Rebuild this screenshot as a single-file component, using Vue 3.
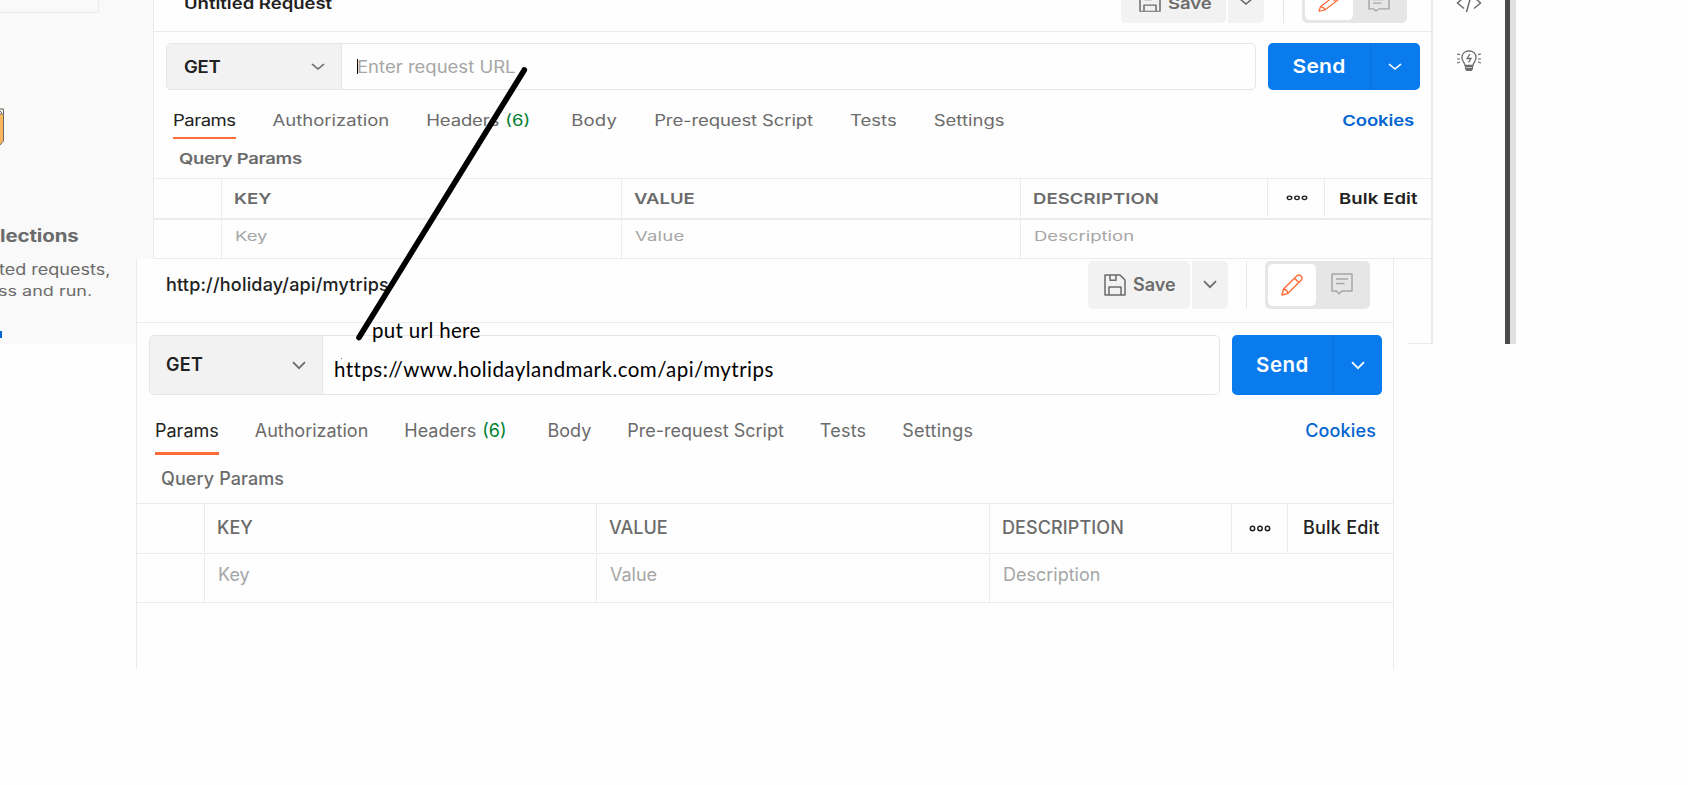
<script setup>
// Sets the tracking so a label occupies its designed width.
const vFit = {
  mounted(el, { value }) {
    const n = el.textContent.length
    const gap = (value - el.offsetWidth) / n
    el.style.letterSpacing = gap.toFixed(3) + 'px'
  }
}

const panels = [
  {
    kind: 'compact',
    title: ['Untitled Request', 148],
    get: 36,
    placeholder: true,
    send: 53,
    save: 44,
    tabs: [
      ['Params', 63], ['Authorization', 117], ['Headers', 73, 25], ['Body', 46],
      ['Pre-request Script', 159], ['Tests', 47], ['Settings', 71]
    ],
    cookies: 72,
    query: 123,
    head: [['KEY', 37], ['VALUE', 61], ['DESCRIPTION', 126]],
    bulk: 79,
    row: [['Key', 33], ['Value', 49], ['Description', 100]]
  },
  {
    kind: 'regular',
    title: ['http://holiday/api/mytrips', 223],
    get: 37,
    placeholder: false,
    send: 53,
    save: 43,
    tabs: [
      ['Params', 64], ['Authorization', 114], ['Headers', 72, 24], ['Body', 44],
      ['Pre-request Script', 157], ['Tests', 46], ['Settings', 71]
    ],
    cookies: 71,
    query: 123,
    head: [['KEY', 36], ['VALUE', 59], ['DESCRIPTION', 122]],
    bulk: 77,
    row: [['Key', 32], ['Value', 47], ['Description', 97]]
  }
]
</script>

<template>
  <div class="page">
    <aside class="sidebar">
      <div class="stub"></div>
      <svg class="folder" width="5" height="38" viewBox="0 0 5 38">
        <path d="M0 .5H3.5V33L0 37.5Z" fill="#ffb65a" />
        <path d="M0 1H3V6H0Z" fill="#eee" />
        <path d="M0 1H3.5V33L0 37M0 6H3M0 3l2 2" fill="none" stroke="#6b6b6b" />
      </svg>
      <div class="side-title"><span class="t" v-fit="79">lections</span></div>
      <div class="side-text"><span class="t" v-fit="111">ted requests,</span></div>
      <div class="side-text second"><span class="t" v-fit="94">ss and run.</span></div>
      <div class="side-link"></div>
    </aside>

    <div class="frame"></div>
    <div class="frame-foot"></div>
    <div class="rail">
      <svg class="code" width="26" height="20" viewBox="0 0 26 20">
        <path d="M8 5L1.5 11L8 16.500M18 5L24.500 11L18 16.500M15.500 2L10.500 20" fill="none" stroke="#6b6b6b" stroke-width="1.500" />
      </svg>
      <svg class="bulb" width="26" height="22" viewBox="0 0 26 22">
        <path d="M9 15.500C9 13 6 11.500 6 7.500C6 3.500 9 1 13 1s7 2.500 7 6.500c0 4-3 5.500-3 8z" fill="none" stroke="#6b6b6b" stroke-width="1.300" />
        <path d="M9 16h8v3l-1.500 2h-5L9 19z" fill="#6b6b6b" />
        <path d="M10 17.500h6" stroke="#fff" stroke-width=".6" />
        <path d="M14 4l-3 4.500h4L12.500 12.500" fill="none" stroke="#6b6b6b" stroke-width="1.300" />
        <path d="M1 4l3 .7M1 9h3M1 13l3-1M25 4l-3 .7M25 9h-3M25 13l-3-1" stroke="#6b6b6b" stroke-width="1.200" />
      </svg>
    </div>
    <div class="edge"></div>

    <section v-for="p in panels" :key="p.kind" class="panel" :class="p.kind">
      <header class="head">
        <span class="t title" v-fit="p.title[1]">{{ p.title[0] }}</span>
        <div class="save">
          <svg class="ico" viewBox="0 0 22 22" preserveAspectRatio="none">
            <path d="M1 1H16L21 6V21H1ZM5 21V13H17V21M6 1V6.200H12V1" fill="none" stroke="#6b6b6b" stroke-width="1.500" stroke-linejoin="round" />
          </svg>
          <span class="t" v-fit="p.save">Save</span>
        </div>
        <div class="save-more">
          <svg class="chev" viewBox="0 0 14 9" preserveAspectRatio="none"><path d="M1 1.200L7 7.200L13 1.200" /></svg>
        </div>
        <div class="sep"></div>
        <div class="toggle">
          <div class="on">
            <svg class="ico" viewBox="0 0 22 22" preserveAspectRatio="none">
              <path d="M1 21L2.500 15L16 1.700Q18 .3 20 2T20.300 6L7 19.300ZM13.500 4.200L17.800 8.500M2.500 15Q6 15.500 7 19.300" fill="none" stroke="#ff6c37" stroke-width="1.400" stroke-linejoin="round" />
            </svg>
          </div>
          <div class="off">
            <svg class="ico" viewBox="0 0 22 22" preserveAspectRatio="none">
              <path d="M1 1H21V18H11L8 20.700L5.500 18H1ZM5 6H17M5 10.500H13.500" fill="none" stroke="#a6a6a6" stroke-width="1.500" stroke-linejoin="round" />
            </svg>
          </div>
        </div>
      </header>

      <div class="request">
        <div class="urlbox">
          <div class="method">
            <span class="t" v-fit="p.get">GET</span>
            <svg class="chev" viewBox="0 0 14 9" preserveAspectRatio="none"><path d="M1 1.200L7 7.200L13 1.200" /></svg>
          </div>
          <div class="url">
            <template v-if="p.placeholder">
              <i class="caret"></i><span class="t" v-fit="159">Enter request URL</span>
            </template>
            <span v-else class="note" v-fit="439">https://www.holidaylandmark.com/api/mytrips</span>
          </div>
        </div>
        <div class="send">
          <div class="send-label"><span class="t" v-fit="p.send">Send</span></div>
          <div class="send-more">
            <svg class="chev" viewBox="0 0 14 9" preserveAspectRatio="none"><path d="M1 1.200L7 7.200L13 1.200" /></svg>
          </div>
        </div>
      </div>

      <nav class="tabs">
        <div v-for="(tab, i) in p.tabs" :key="tab[0]" class="tab" :class="{ active: i === 0, counted: tab[2] }">
          <span class="t" v-fit="tab[1]">{{ tab[0] }}</span>
          <span v-if="tab[2]" class="t count" v-fit="tab[2]">(6)</span>
        </div>
        <div class="tab cookies"><span class="t" v-fit="p.cookies">Cookies</span></div>
      </nav>

      <div class="query"><span class="t" v-fit="p.query">Query Params</span></div>

      <div class="grid titles">
        <div class="cell"></div>
        <div v-for="h in p.head" :key="h[0]" class="cell"><span class="t" v-fit="h[1]">{{ h[0] }}</span></div>
        <div class="cell dots">
          <svg class="ellipsis" viewBox="0 0 22 7" preserveAspectRatio="none">
            <g fill="none" stroke="#212121" stroke-width="1.500">
              <circle cx="3.500" cy="3.500" r="2.200" /><circle cx="11" cy="3.500" r="2.200" /><circle cx="18.500" cy="3.500" r="2.200" />
            </g>
          </svg>
        </div>
        <div class="cell bulk"><span class="t" v-fit="p.bulk">Bulk Edit</span></div>
      </div>
      <div class="grid inputs">
        <div class="cell"></div>
        <div v-for="r in p.row" :key="r[0]" class="cell"><span class="t" v-fit="r[1]">{{ r[0] }}</span></div>
      </div>
    </section>

    <svg class="marker" width="180" height="300" viewBox="350 60 180 300">
      <path d="M524.300 70L359 337.500" stroke="#000" stroke-width="5.600" stroke-linecap="round" />
      <path d="M341 358.500h1" stroke="#777" />
    </svg>
    <div class="hint"><span class="note" v-fit="109">put url here</span></div>
  </div>
</template>

<style>
body { background: #fff; }
</style>

<style scoped>
.page {
  position: relative;
  width: 1688px;
  height: 785px;
  overflow: hidden;
  background: #fefefe;
  font-family: Inter, "Liberation Sans", sans-serif;
  color: #6b6b6b;
}
.page * { box-sizing: border-box; }
.t, .note { display: inline-block; flex: none; white-space: pre; line-height: 24px; }

.sidebar { position: absolute; left: 0; top: 0; width: 153px; height: 344px; background: #f9f9f9; overflow: hidden; }
.stub { width: 99px; height: 13px; border: solid #ebebeb; border-width: 0 1px 1px 0; border-radius: 0 0 3px 0; }
.folder { display: block; margin-top: 95px; }
.side-title { height: 24px; margin-top: 78px; }
.side-text { height: 24px; margin-top: 10px; margin-left: -1px; }
.side-text.second { margin-top: -3px; margin-left: -2px; }
.side-title .t { font-size: 20.500px; font-weight: 700; transform: scaleY(.84); }
.side-text .t { transform: scaleY(.85); }
.side-text.second .t { transform: scaleY(.76); }
.side-link { width: 2px; height: 7px; margin-top: 28px; background: #0265d2; }

.frame { position: absolute; left: 1431px; top: 0; width: 2px; height: 344px; background: #ebebeb; }
.frame-foot { position: absolute; left: 1408px; top: 343px; width: 24px; height: 1px; background: #ebebeb; }
.rail { position: absolute; left: 1456px; top: -8px; width: 26px; }
.code, .bulb { display: block; }
.bulb { margin-top: 38px; }
.edge { position: absolute; left: 1505px; top: 0; width: 11px; height: 344px; background: #e0e0e0; border-left: 5px solid #4b4b4b; }

.panel { position: absolute; background: #fefefe; overflow: hidden; }
.compact {
  --squash: .82; --head-h: 47px; --btn: 38px; --icon: 17px; --size: 18.500px;
  left: 153px; top: 0; width: 1278px; height: 259px;
  border-left: 1px solid #ebebeb;
}
.regular {
  --squash: 1; --head-h: 63px; --btn: 48px; --icon: 22px; --size: 18px;
  left: 136px; top: 259px; width: 1258px; height: 410px;
  border: solid #ebebeb; border-width: 0 1px;
}
.t { font-size: var(--size, 18px); transform: scaleY(var(--squash)); }

.head { display: flex; align-items: center; height: calc(var(--head-h) + 1px); border-bottom: 1px solid #ebebeb; }
.compact .head { margin-top: -16px; padding: 0 24px 7px 30px; }
.regular .head { padding: 0 23px 12px 29px; }
.title { color: #212121; font-weight: 600; margin-right: auto; }
.compact .title { position: relative; top: -1px; }
.regular .title { font-weight: 500; }
.save, .save-more { display: flex; align-items: center; height: var(--btn); background: #f2f2f2; }
.save { width: 102px; padding-left: 16px; gap: 7px; border-radius: 5px; font-weight: 600; }
.compact .save { width: 105px; padding-left: 18px; padding-bottom: 2px; }
.save-more { justify-content: center; width: 36px; margin-left: 2px; border-radius: 0 5px 5px 0; }
.compact .save-more { padding-bottom: 4px; }
.ico { display: block; flex: none; width: 22px; height: var(--icon); }
.chev { display: block; width: 14px; height: calc(9px * var(--squash)); fill: none; stroke: #6b6b6b; stroke-width: 1.700; }
.sep { width: 1px; height: var(--btn); margin: 0 18px; background: #e6e6e6; }
.compact .sep { margin-left: 19px; }
.toggle { display: flex; width: 105px; height: var(--btn); padding: 3px; background: #e6e6e6; border-radius: 5px; }
.on, .off { display: flex; flex: 1; align-items: center; justify-content: center; }
.on { flex: 0 0 48px; background: #fff; border-radius: 5px; }
.off { padding-left: 1px; padding-bottom: 1px; }
.compact .on, .compact .off { padding-bottom: 2px; }

.request { display: flex; gap: 12px; height: 60px; margin: 12px 11px 0 12px; }
.compact .request { height: 47px; margin: 11px 11px 0 12px; }
.urlbox { display: flex; flex: 1; border: 1px solid #e6e6e6; border-radius: 5px; overflow: hidden; }
.method { display: flex; flex: none; align-items: center; justify-content: space-between; width: 173px; padding: 0 16px 0 16px; background: #f2f2f2; border-right: 1px solid #e6e6e6; color: #212121; font-weight: 600; }
.compact .method { width: 175px; padding-left: 17px; padding-right: 16px; }
.compact .method .t { transform: scaleY(.92); }
.url { display: flex; align-items: center; padding-left: 11px; color: #a6a6a6; }
.compact .url { padding-left: 15px; }
.compact .url .t { margin-left: -1px; transform: scaleY(.9); }
.caret { width: 1px; height: 15px; background: #000; }
.note { font-family: Lato, "Noto Sans", sans-serif; font-size: 20.500px; color: #000; }
.url .note { padding-top: 8px; }
.send { display: flex; flex: none; width: 150px; background: #097bed; border-radius: 5px; overflow: hidden; color: #fff; font-weight: 600; }
.compact .send { width: 152px; }
.send-label, .send-more { display: flex; align-items: center; justify-content: center; }
.send-label { flex: 1; }
.send-label .t { font-size: 20.500px; }
.compact .send-label .t { font-size: 21px; transform: scaleY(.92); }
.compact .send-label, .compact .method { padding-top: 1px; }
.send-more { width: 49px; border-left: 1px solid #0a6fd6; }
.compact .send-more { width: 50px; padding-right: 2px; padding-top: 1px; }
.send .chev { stroke: #fff; }

.tabs { display: flex; gap: 36px; height: 60px; padding: 0 17px 0 18px; }
.compact .tabs { height: 49px; gap: 37px; padding: 0 17px 0 19px; }
.tab { display: flex; flex: none; gap: 6px; height: 100%; padding-top: 24px; border-bottom: 3px solid transparent; }
.compact .tab { padding-top: 18px; border-bottom-width: 2px; }
.tab.active { color: #212121; border-bottom-color: #ff6c37; }
.counted { margin-right: 5px; }
.compact .counted { margin-right: 4px; }
.count { color: #007f31; }
.cookies { margin-left: auto; color: #0265d2; font-weight: 500; }
.compact .cookies { font-weight: 600; }

.query { display: flex; align-items: center; height: 48px; padding-left: 24px; font-weight: 500; }
.compact .query { height: 39px; padding: 0 0 2px 25px; font-weight: 600; }

.grid { display: grid; grid-template-columns: 68px 392px 393px 242px 56px 1fr; }
.compact .grid { grid-template-columns: 68px 400px 399px 247px 57px 1fr; }
.cell { display: flex; align-items: center; padding-left: 12px; border-right: 1px solid #ebebeb; }
.cell:last-child { border-right: 0; }
.titles { height: 50px; border-top: 1px solid #ebebeb; font-weight: 500; }
.compact .titles { height: 40px; font-weight: 600; }
.titles .cell { margin-bottom: 1px; }
.dots { justify-content: center; padding: 0; }
.compact .dots { padding-left: 2px; }
.cell.bulk { padding-left: 15px; color: #212121; }
.compact .cell.bulk { padding-left: 14px; }
.ellipsis { width: 22px; height: calc(7px * var(--squash)); }
.inputs { height: 50px; border: solid #ebebeb; border-width: 1px 0; color: #a6a6a6; }
.compact .inputs { height: 41px; border-top-width: 2px; }
.inputs .cell { padding: 0 0 6px 13px; }
.inputs .cell:last-child { grid-column: 4 / -1; }
.compact .inputs .t { transform: scaleY(.72); }

.marker { position: absolute; left: 350px; top: 60px; overflow: visible; }
.hint { position: absolute; left: 372px; top: 318px; }
</style>
